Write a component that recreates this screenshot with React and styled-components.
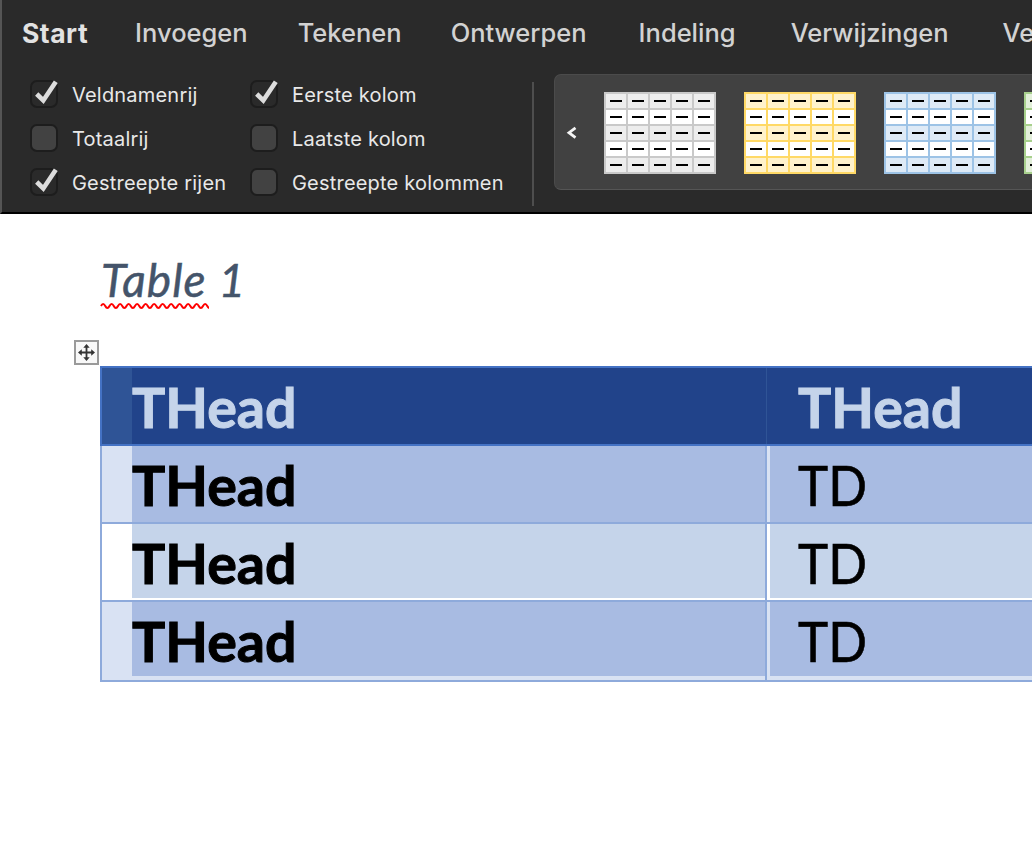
import React from "react";
import styled, { createGlobalStyle } from "styled-components";

const GlobalStyle = createGlobalStyle`
  html, body {
    margin: 0;
    padding: 0;
    background: #fff;
    overflow: hidden;
  }
`;

const Page = styled.div`
  width: 1032px;
  height: 864px;
  overflow: hidden;
`;

const Ribbon = styled.div`
  height: 214px;
  box-sizing: border-box;
  background: #2a2a2a;
  border-left: 2px solid #555;
  border-bottom: 2px solid #000;
  display: flex;
  flex-direction: column;
  overflow: hidden;
`;

const Tabs = styled.div`
  display: flex;
  flex: none;
  padding: 16px 0 0 20px;
  height: 72px;
  box-sizing: border-box;
  white-space: nowrap;
`;

const Tab = styled.div`
  font-family: Inter, "Liberation Sans", sans-serif;
  font-size: ${(p) => (p.$active ? 26.5 : 25.5)}px;
  letter-spacing: ${(p) => (p.$active ? 0.5 : 0)}px;
  line-height: 34px;
  font-weight: ${(p) => (p.$active ? 700 : 500)};
  color: ${(p) => (p.$active ? "#e2e2e2" : "#d2d2d2")};
  margin-right: ${(p) => p.$gap}px;
`;

const Tools = styled.div`
  display: flex;
  align-items: flex-start;
`;

const Options = styled.div`
  display: grid;
  flex: none;
  grid-template-columns: 220px 258px;
  grid-auto-rows: 44px;
  padding-left: 28px;
  box-sizing: border-box;
  width: 506px;
`;

const Option = styled.label`
  display: flex;
  align-items: center;
  height: 44px;
  font-family: Inter, "Liberation Sans", sans-serif;
  font-size: 20px;
  letter-spacing: 0.2px;
  color: #e8e8e8;
`;

const OptionText = styled.span`
  position: relative;
  top: 1px;
`;

const Box = styled.span`
  position: relative;
  flex: none;
  width: 28px;
  height: 28px;
  box-sizing: border-box;
  margin-right: 14px;
  border-radius: 7px;
  border: 2px solid #1d1d1d;
  background: ${(p) => (p.$checked ? "#2a2a2a" : "#424242")};

  svg {
    position: absolute;
    left: -2px;
    top: -2px;
  }
`;

const Divider = styled.div`
  flex: none;
  width: 2px;
  height: 124px;
  margin: 10px 0 0 24px;
  background: #4e4e4e;
`;

const Gallery = styled.div`
  display: flex;
  align-items: flex-start;
  flex: none;
  width: 520px;
  height: 116px;
  margin: 2px 0 0 20px;
  box-sizing: border-box;
  background: #414141;
  border: 1px solid #4b4b4b;
  border-bottom-color: #555;
  border-right: none;
  border-radius: 7px 0 0 7px;
  padding: 17px 0 0 11px;
`;

const Prev = styled.div`
  flex: none;
  width: 38px;
  height: 82px;
  display: flex;
  align-items: center;
  svg {
    display: block;
  }
`;

const Swatches = styled.div`
  display: flex;
  flex: none;
  gap: 28px;
`;

const Swatch = styled.div`
  display: grid;
  flex: none;
  grid-template-columns: repeat(5, 1fr);
  grid-template-rows: repeat(5, 1fr);
  gap: 2px;
  width: 112px;
  height: 82px;
  padding: 2px;
  box-sizing: border-box;
  background: ${(p) => p.$line};
`;

const SwatchCell = styled.div`
  background: ${(p) => (p.$odd ? p.$fill : "#fff")};
  display: flex;
  align-items: center;
  justify-content: center;

  &::after {
    content: "";
    width: 12px;
    height: 2px;
    background: #000;
  }
`;

const Doc = styled.div`
  padding: 43px 0 0 100px;
`;

const Title = styled.div`
  font-family: Lato, "Open Sans", sans-serif;
  font-style: italic;
  font-size: 46px;
  letter-spacing: 1.1px;
  line-height: 46px;
  -webkit-text-stroke: 0.5px #44546a;
  color: #44546a;
  height: 109px;
  margin-left: 1px;
`;

const Misspelled = styled.span`
  position: relative;

  svg {
    position: absolute;
    left: -1px;
    top: 50px;
  }
`;

const TableWrap = styled.div`
  position: relative;
  width: 1100px;
`;

const MoveHandle = styled.div`
  position: absolute;
  left: -26px;
  top: -26px;
  width: 25px;
  height: 25px;
  box-sizing: border-box;
  border: 2px solid #9a9a9a;
  background: #f8f8f8;
  display: flex;
  align-items: center;
  justify-content: center;
`;

const DataTable = styled.div`
  display: grid;
  grid-template-columns: 665px 1fr;
  grid-template-rows: 80px 78px 78px 80px;
`;

const HeadCell = styled.div`
  box-sizing: border-box;
  background: #21438a;
  border-top: 2px solid #4472c4;
  border-bottom: 2px solid #4472c4;
  border-left: ${(p) => (p.$first ? "2px solid #4472c4" : "none")};
  padding-left: ${(p) => (p.$first ? 30 : 0)}px;
  ${(p) => p.$first && "background: #2f5496;"}
`;

const HeadInner = styled.div`
  height: 76px;
  background: #21438a;
  border-left: ${(p) => (p.$line ? "1px solid #2f5496" : "none")};
  margin-left: ${(p) => (p.$line ? 1 : 0)}px;
  padding-left: ${(p) => (p.$line ? 31 : 0)}px;
`;

const RowCell = styled.div`
  box-sizing: border-box;
  background: ${(p) => p.$edge};
  border-left: 2px solid #8eaadb;
  border-bottom: 2px solid #8eaadb;
  padding-left: ${(p) => (p.$first ? 30 : 3)}px;
`;

const RowInner = styled.div`
  height: ${(p) => p.$height}px;
  background: ${(p) => p.$fill};
  padding-left: ${(p) => p.$pad || 0}px;
`;

const CellText = styled.div`
  font-family: Lato, "Open Sans", sans-serif;
  font-size: 55.5px;
  line-height: 78px;
  font-weight: ${(p) => (p.$bold ? 700 : 400)};
  -webkit-text-stroke: ${(p) => (p.$bold ? "1px" : "0.6px")} ${(p) => p.$color || "#000"};
  color: ${(p) => p.$color || "#000"};
  white-space: nowrap;
  transform-origin: left center;
  transform: scaleX(${(p) => p.$squeeze || 1});
`;

const Check = () => (
  <svg width="28" height="28" viewBox="0 0 28 28">
    <path d="M6.7 14 L13.3 20.5 L25.8 1.7" fill="none" stroke="#dcdcdc" strokeWidth="4.6" strokeLinejoin="miter" />
  </svg>
);

const Checkbox = ({ checked, label }) => (
  <Option>
    <Box $checked={checked}>{checked && <Check />}</Box>
    <OptionText>{label}</OptionText>
  </Option>
);

const MoveIcon = () => (
  <svg width="17" height="17" viewBox="0 0 17 17" fill="#333">
    <path d="M7.6 3h1.8v11H7.6zM3 7.6h11v1.8H3z" />
    <path d="M8.5 0 L11.7 3.8 H5.3z M8.5 17 L5.3 13.2 H11.7z M0 8.5 L3.8 5.3 V11.7z M17 8.5 L13.2 11.7 V5.3z" />
  </svg>
);

// wavy spell check line under the word
const Squiggle = () => {
  const period = 8.5;
  let d = "M1 4";
  for (let x = 1; x < 108; x += period) {
    d += ` Q${x + period / 4} 0 ${x + period / 2} 4 T${x + period} 4`;
  }
  return (
    <svg width="109" height="8" viewBox="0 0 109 8">
      <path d={d} fill="none" stroke="#f00" strokeWidth="2" />
    </svg>
  );
};

const tabs = [
  ["Start", 47, true],
  ["Invoegen", 50],
  ["Tekenen", 49],
  ["Ontwerpen", 52],
  ["Indeling", 55],
  ["Verwijzingen", 54],
  ["Verzendlijsten", 0],
];

const swatches = [
  { line: "#c9c9c9", fill: "#ededed" },
  { line: "#ffd966", fill: "#fff2cc" },
  { line: "#9dc3e6", fill: "#deeaf6" },
  { line: "#a8d08d", fill: "#e2efd9" },
];

const rows = [
  { id: "a", edge: "#d9e2f3", fill: "#a8bbe2", height: 76 },
  { id: "b", edge: "#fff", fill: "#c5d4ea", height: 74 },
  { id: "c", edge: "#d9e2f3", fill: "#a8bbe2", height: 74 },
];

const App = () => {
  return (
    <Page>
      <GlobalStyle />
      <Ribbon>
        <Tabs>
          {tabs.map(([name, gap, active]) => (
            <Tab key={name} $gap={gap} $active={active}>
              {name}
            </Tab>
          ))}
        </Tabs>
        <Tools>
          <Options>
            <Checkbox checked label="Veldnamenrij" />
            <Checkbox checked label="Eerste kolom" />
            <Checkbox label="Totaalrij" />
            <Checkbox label="Laatste kolom" />
            <Checkbox checked label="Gestreepte rijen" />
            <Checkbox label="Gestreepte kolommen" />
          </Options>
          <Divider />
          <Gallery>
            <Prev>
              <svg width="12" height="14" viewBox="0 0 12 14">
                <path d="M9.5 1.8 L3 6.7 L9.5 11.6" fill="none" stroke="#f4f4f4" strokeWidth="2.8" />
              </svg>
            </Prev>
            <Swatches>
              {swatches.map((s) => (
                <Swatch key={s.line} $line={s.line}>
                  {Array.from({ length: 25 }).map((_, i) => (
                    <SwatchCell key={i} $odd={Math.floor(i / 5) % 2 === 0} $fill={s.fill} />
                  ))}
                </Swatch>
              ))}
            </Swatches>
          </Gallery>
        </Tools>
      </Ribbon>
      <Doc>
        <Title>
          <Misspelled>
            Table
            <Squiggle />
          </Misspelled>{" "}
          1
        </Title>
        <TableWrap>
          <MoveHandle>
            <MoveIcon />
          </MoveHandle>
          <DataTable>
            <HeadCell $first>
              <HeadInner>
                <CellText $bold $color="#c5d4ea">
                  THead
                </CellText>
              </HeadInner>
            </HeadCell>
            <HeadCell>
              <HeadInner $line>
                <CellText $bold $color="#c5d4ea">
                  THead
                </CellText>
              </HeadInner>
            </HeadCell>
            {rows.map((r) => (
              <React.Fragment key={r.id}>
                <RowCell $first $edge={r.edge}>
                  <RowInner $fill={r.fill} $height={r.height}>
                    <CellText $bold>THead</CellText>
                  </RowInner>
                </RowCell>
                <RowCell $edge={r.edge}>
                  <RowInner $fill={r.fill} $height={r.height} $pad={28}>
                    <CellText $squeeze={0.92}>TD</CellText>
                  </RowInner>
                </RowCell>
              </React.Fragment>
            ))}
          </DataTable>
        </TableWrap>
      </Doc>
    </Page>
  );
};

export default App;
